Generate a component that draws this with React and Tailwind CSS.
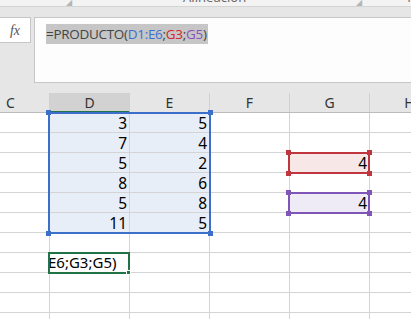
import React from 'react';

const cols = [
  { key: 'C', w: 'w-[50px]', pl: 'pl-[6px] text-left' },
  { key: 'D', w: 'w-[80px]' },
  { key: 'E', w: 'w-[80px]' },
  { key: 'F', w: 'w-[80px]' },
  { key: 'G', w: 'w-[80px]' },
  { key: 'H', w: 'w-[80px]' },
];

const data = [
  { D: '3', E: '5' },
  { D: '7', E: '4' },
  { D: '5', E: '2', G: '4' },
  { D: '8', E: '6' },
  { D: '5', E: '8', G: '4' },
  { D: '11', E: '5' },
  {},
  {},
  {},
  {},
  {},
];

const Handle = ({ className }) => (
  <div className={`absolute w-[5px] h-[5px] ${className}`} />
);

const RangeBox = ({ className, color, handle }) => (
  <div className={`absolute border-2 ${color} ${className}`}>
    <Handle className={`${handle} -left-[4px] -top-[4px]`} />
    <Handle className={`${handle} -right-[4px] -top-[4px]`} />
    <Handle className={`${handle} -left-[4px] -bottom-[4px]`} />
    <Handle className={`${handle} -right-[4px] -bottom-[4px]`} />
  </div>
);

export default function App() {
  const cellFont = { fontFamily: '"Noto Sans", "Open Sans", sans-serif' };

  return (
    <div className="w-[411px] h-[319px] overflow-hidden bg-[#e6e6e6] select-none" style={cellFont}>
      {/* ribbon tail */}
      <div className="h-[7px] bg-[#f3f3f3] border-b border-[#d4d4d4] flex items-start overflow-hidden text-[13px] text-[#6a6a6a]">
        <span className="ml-[66px] -mt-[2px] text-[8px] text-[#b5b5b5] leading-none">◢</span>
        <div className="ml-[5px] w-px h-full bg-[#dadada]" />
        <span className="ml-[106px] -mt-[9px] leading-none">Alineación</span>
        <span className="ml-[110px] -mt-[2px] text-[8px] text-[#b5b5b5] leading-none">◢</span>
        <div className="ml-[5px] w-px h-full bg-[#dadada]" />
        <span className="ml-[40px] -mt-[9px] leading-none">Nú</span>
      </div>

      {/* formula bar */}
      <div className="flex items-start pt-[10px]">
        <div className="w-[31px] h-[26px] bg-white border border-[#c6c6c6] border-l-0 flex items-center justify-center">
          <span className="italic text-[14px] text-[#555]" style={{ fontFamily: '"Liberation Serif", serif' }}>fx</span>
        </div>
        <div className="ml-[3px] flex-1 h-[66px] bg-[#fdfdfd] border border-[#c6c6c6] border-r-0 pl-[11px] pt-[3px]">
          <span className="inline-block bg-[#c6c6c6] h-[20px] leading-[20px] text-[13.5px] tracking-[-0.3px] pr-[1px] text-[#444]" style={{ fontFamily: '"Open Sans", sans-serif' }}>
            =PRODUCTO(<span className="text-[#3a6fd4]">D1:E6</span>;<span className="text-[#d9202e]">G3</span>;<span className="text-[#8a4fbf]">G5</span>)
          </span>
        </div>
      </div>

      {/* sheet */}
      <div className="mt-[10px] relative">
        <div className="flex h-[20px] border-b border-[#bcbcbc]">
          {cols.map((c) => (
            <div
              key={c.key}
              className={`${c.w} shrink-0 border-r border-[#d0d0d0] text-[14px] leading-[19px] text-[#333] ${c.pl || 'text-center'} ${c.key === 'D' ? 'bg-[#d2d2d2] border-b-2 border-b-[#217346] -mb-px' : ''}`}
            >
              {c.key}
            </div>
          ))}
        </div>
        <div className="bg-white">
          {data.map((row, i) => (
            <div key={i} className="flex h-[20px]">
              {cols.map((c) => {
                const inRange = i < 6 && (c.key === 'D' || c.key === 'E');
                let fill = 'bg-white';
                if (inRange) fill = 'bg-[#e8eef8]';
                if (i === 2 && c.key === 'G') fill = 'bg-[#f8e7e7]';
                if (i === 4 && c.key === 'G') fill = 'bg-[#efebf6]';
                return (
                  <div
                    key={c.key}
                    className={`${c.w} shrink-0 border-r border-b border-[#d4d4d4] ${fill} text-right pr-[2px] text-[15.5px] leading-[21px] text-black overflow-hidden whitespace-nowrap`}
                  >
                    {row[c.key] || ''}
                    {i === 7 && c.key === 'D' && (
                      <div className="text-left -ml-[2px] text-[15px] -mt-px">E6;G3;G5)</div>
                    )}
                  </div>
                );
              })}
            </div>
          ))}
        </div>

        <RangeBox className="left-[48px] top-[19px] w-[163px] h-[122px]" color="border-[#3b6fc9]" handle="bg-[#3b6fc9]" />
        <RangeBox className="left-[288px] top-[59px] w-[82px] h-[22px]" color="border-[#c0363e]" handle="bg-[#c0363e]" />
        <RangeBox className="left-[288px] top-[99px] w-[82px] h-[22px]" color="border-[#7f55b7]" handle="bg-[#7f55b7]" />

        <div className="absolute left-[48px] top-[159px] w-[82px] h-[22px] border-2 border-[#217346]">
          <div className="absolute -right-[3px] -bottom-[3px] w-[5px] h-[5px] bg-[#217346] border border-white" />
        </div>
      </div>
    </div>
  );
}
